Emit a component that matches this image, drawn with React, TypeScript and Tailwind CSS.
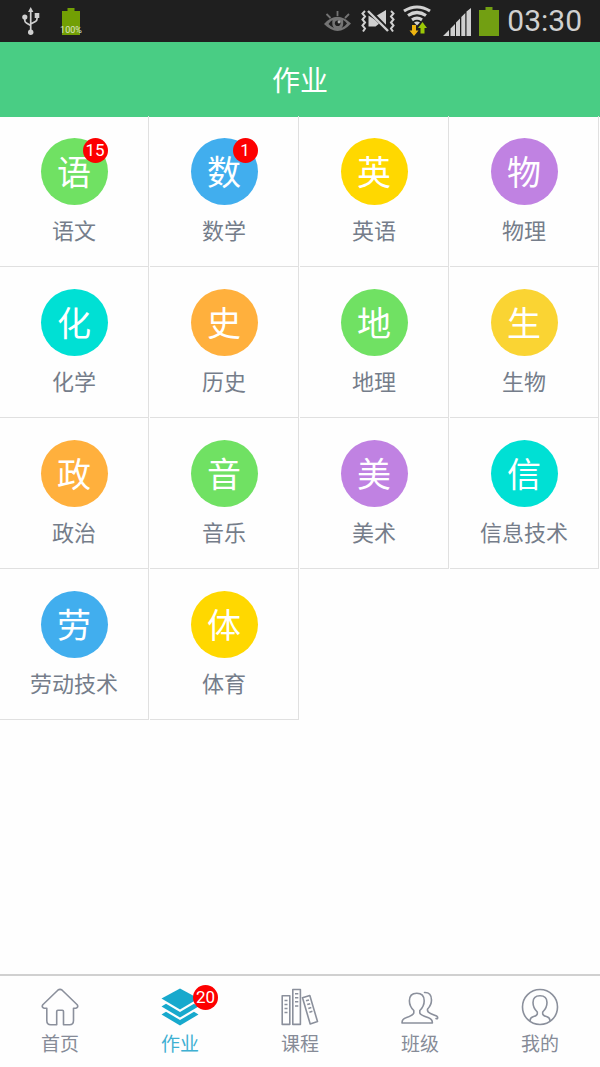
import type { ReactNode } from "react";
import clsx from "clsx";

type Subject = {
    name: string;
    short: string;
    color: string;
    count?: number;
};

const subjects: Subject[] = [
    { name: "语文", short: "语", color: "bg-[#70e163]", count: 15 },
    { name: "数学", short: "数", color: "bg-[#41aeee]", count: 1 },
    { name: "英语", short: "英", color: "bg-[#ffd800]" },
    { name: "物理", short: "物", color: "bg-[#c082e2]" },
    { name: "化学", short: "化", color: "bg-[#00e0d4]" },
    { name: "历史", short: "史", color: "bg-[#ffb03d]" },
    { name: "地理", short: "地", color: "bg-[#70e163]" },
    { name: "生物", short: "生", color: "bg-[#fad433]" },
    { name: "政治", short: "政", color: "bg-[#ffb03d]" },
    { name: "音乐", short: "音", color: "bg-[#70e163]" },
    { name: "美术", short: "美", color: "bg-[#c082e2]" },
    { name: "信息技术", short: "信", color: "bg-[#00e0d4]" },
    { name: "劳动技术", short: "劳", color: "bg-[#41aeee]" },
    { name: "体育", short: "体", color: "bg-[#ffd800]" },
];

function Badge({ count, className }: { count: number; className: string }) {
    return (
        <span
            className={clsx(
                "absolute flex h-[25px] w-[25px] items-center justify-center rounded-full bg-[#fd0000] font-['Roboto',sans-serif] text-[17px] leading-none text-white",
                className
            )}
        >
            {count}
        </span>
    );
}

function StatusBar() {
    return (
        <div className="flex h-[42px] shrink-0 items-center justify-between bg-[#1f1f1f] pl-[22px] pr-[18px] font-['Roboto',sans-serif]">
            <div className="flex items-center gap-5">
                {/* USB */}
                <svg width="18" height="42" viewBox="0 0 18 42" fill="none" stroke="#cfcfcf" strokeWidth="1.7">
                    <path d="M8.7 10v22M2.8 17v3.5q0 1.6 1.6 2.4l4.3 2.6M15 16v3q0 1.7-1.6 2.5l-4.7 2.6" />
                    <path d="M8.7 7l2.7 5H6z" fill="#cfcfcf" stroke="none" />
                    <circle cx="2.8" cy="17" r="2.6" fill="#cfcfcf" stroke="none" />
                    <circle cx="8.7" cy="32.3" r="2.7" fill="#cfcfcf" stroke="none" />
                    <path d="M12.7 13h4.6v5h-4.6z" fill="#cfcfcf" stroke="none" />
                </svg>
                <div className="relative">
                    <svg width="22" height="42" viewBox="0 0 22 42">
                        <path d="M7.500 8h7v3H20v24H2V11h5.500z" fill="#729f04" />
                    </svg>
                    <span className="absolute bottom-[7px] left-1/2 -translate-x-1/2 text-[9px] leading-none text-[#dde5c8]">100%</span>
                </div>
            </div>

            <div className="flex items-center">
                {/* Smart stay eye */}
                <svg className="mr-[9px]" width="28" height="42" viewBox="0 0 28 42" fill="none" stroke="#747474">
                    <path d="M0 24Q13 10 27 23.5Q14 38 0 24z" fill="#747474" stroke="none" />
                    <path d="M4.500 24Q6.500 21 8.500 20Q7.500 25 10 28Q6.500 26.500 4.500 24zM23 23.500Q21.500 21 19 20Q20 25 17.500 28Q21 26.500 23 23.500z" fill="#1f1f1f" stroke="none" />
                    <circle cx="13.7" cy="23.3" r="2.8" fill="#1f1f1f" stroke="none" />
                    <circle cx="15" cy="22" r="1.4" fill="#aaa" stroke="none" />
                    <path d="M13.500 11v5M2.500 14l4 4M25 14l-4 4" strokeWidth="1.8" />
                </svg>
                {/* Sound off, vibrating */}
                <svg className="mr-2" width="34" height="42" viewBox="0 0 34 42" fill="none" stroke="#cfcfcf">
                    <path d="M7.500 15.500V26.500H14.500L19 23zM15 16L25 10V27z" fill="#cfcfcf" stroke="none" />
                    <path d="M7 9.500L28 31" stroke="#1f1f1f" strokeWidth="4.500" />
                    <path d="M7 11L27 31" strokeWidth="2.400" />
                    <path d="M4 11L1.500 13.500 4 16.500 1.500 19.500 4 22.500 1.500 25.500 4 28.500 2 31.500M30 11l2.500 2.500L30 16.500l2.500 3L30 22.500l2.500 3L30 28.500l2 3" strokeWidth="2" />
                </svg>
                {/* Wi-Fi with traffic arrows */}
                <svg className="mr-3" width="28" height="42" viewBox="0 0 28 42" fill="none" stroke="#d2d2d2" strokeWidth="3.2">
                    <path d="M1 11Q14 3 27 11M5 15.500Q14 9.500 23 15.500M9 19.800Q14 16.500 19 19.800" />
                    <path d="M11 22.500q3-2 6 0l-3 3z" fill="#d2d2d2" stroke="none" />
                    <path d="M9 25h4v5.500H15.500L11 36 6.500 30.500H9z" fill="#efb511" stroke="none" />
                    <path d="M17.500 33.500h4V28H24l-4.500-6-4.500 6h2.500z" fill="#9bc706" stroke="none" />
                </svg>
                {/* Signal strength */}
                <svg className="mr-2" width="28" height="42" viewBox="0 0 28 42" fill="#cfcfcf">
                    <path d="M0 36l6-6v6zM7.500 28.500L12 24v12H7.500zM13 22.500l4-4v17.500h-4zM18.300 17l4-4v23h-4zM23.500 11.500L28 8v28h-4.500z" />
                </svg>
                <svg className="mr-2" width="20" height="42" viewBox="0 0 20 42">
                    <path d="M6.500 7h7v3H20v26H0V10h6.500z" fill="#729f12" />
                </svg>
                <time className="text-[30px] leading-none text-[#d0d0d0]">03:30</time>
            </div>
        </div>
    );
}

function SubjectCell({ subject }: { subject: Subject }) {
    return (
        <li className="pr-px">
            <button
                type="button"
                className="flex h-[151px] w-full flex-col items-center gap-2 border-r border-b border-[#e0e0e0] pt-[22px]"
            >
                <span
                    className={clsx(
                        "relative flex h-[67px] w-[67px] items-center justify-center rounded-full pb-0.5 text-[34px] leading-none text-white",
                        subject.color
                    )}
                >
                    {subject.short}
                    {subject.count !== undefined && <Badge count={subject.count} className="right-0 top-0" />}
                </span>
                <span className="text-[22px] leading-8 text-[#757d8a]">{subject.name}</span>
            </button>
        </li>
    );
}

function HomeIcon() {
    return (
        <svg width="38" height="38" viewBox="0 0 38 38" fill="none" stroke="#8b909c" strokeWidth="1.6" strokeLinejoin="round">
            <path d="M5.800 20.200H3.200Q.2 19.300 1.800 16.800L16.800 2.200Q19 .4 21.200 2.200L36.200 16.800Q37.800 19.300 34.800 20.200H32.500V32.500Q32.500 36.800 28.500 36.800H22.500V23.500Q22.500 22.300 21.300 22.300H16.900Q15.700 22.300 15.700 23.500V36.800H9.800Q5.800 36.800 5.800 32.500z" />
        </svg>
    );
}

function LayersIcon() {
    return (
        <svg width="38" height="38" viewBox="0 0 38 38" fill="#17a9cd">
            <path d="M19 .5L37.500 10.500L19 21.500L.5 10.500z" />
            <path d="M.5 18.500L5 15.800L19 24L33 15.800L37.500 18.500L19 29.500z" />
            <path d="M.5 26.500L5 23.800L19 32L33 23.800L37.500 26.500L19 37.500z" />
        </svg>
    );
}

function BooksIcon() {
    return (
        <svg width="38" height="38" viewBox="0 0 38 38" fill="none" stroke="#8b909c" strokeWidth="1.6" strokeLinejoin="round">
            <path d="M1.200 7.800h7.600v28.600H1.200zM11.800 1.500h7.600v34.900h-7.600zM21.500 9.800l7.300-2.300 7.700 26-7.300 2.500z" />
            <path d="M3.500 12.500h3M3.500 16.500h3M3.500 20.500h3M3.500 24.500h3M14 5.800h3.300M14 9.800h3.300M14 13.800h3.300M14 18h3.300M25 12.800l3-.9M26.200 16.600l3-.9M27.300 20.400l3-.9M28.400 24.200l3-.9" />
        </svg>
    );
}

function ClassIcon() {
    return (
        <svg width="38" height="38" viewBox="0 0 38 38" fill="none" stroke="#8b909c" strokeWidth="1.6" strokeLinecap="round" strokeLinejoin="round">
            <path d="M12.800 22.500Q8.400 18.500 8.400 12.800Q8.400 5.200 15.800 5.200Q23.200 5.200 23.200 12.800Q23.200 18.500 18.800 22.500V25Q19.500 27.200 27.500 29.800Q31.400 31 31.400 35H1Q1 31 4.900 29.800Q12 27.400 12.800 25z" />
            <path d="M23.500 4.500Q30.500 4.200 30.500 12Q30.500 17 26.600 21Q25.800 24 29.500 25.500Q34.500 27.500 36 28.300Q37 29 36.500 30.600H35" />
        </svg>
    );
}

function ProfileIcon() {
    return (
        <svg width="38" height="38" viewBox="0 0 38 38" fill="none" stroke="#8b909c" strokeWidth="1.6" strokeLinejoin="round">
            <circle cx="19" cy="19" r="17.500" />
            <path d="M9 33Q9 29.800 12 28.800Q15.800 27.800 16.300 26V24Q12 20 12 14.500Q12 7.800 19 7.800Q26 7.800 26 14.500Q26 20 21.700 24V26Q22.200 27.800 26 28.800Q29 29.800 29 33" />
        </svg>
    );
}

type Tab = { label: string; icon: ReactNode; active?: boolean; count?: number };

const tabs: Tab[] = [
    { label: "首页", icon: <HomeIcon /> },
    { label: "作业", icon: <LayersIcon />, active: true, count: 20 },
    { label: "课程", icon: <BooksIcon /> },
    { label: "班级", icon: <ClassIcon /> },
    { label: "我的", icon: <ProfileIcon /> },
];

export default function App() {
    return (
        <div className="flex min-h-screen flex-col bg-[#fefefe] font-['Noto_Sans_CJK_SC',sans-serif]">
            <StatusBar />

            <header className="flex h-[75px] shrink-0 items-center justify-center bg-[#49cd84] pb-0.5">
                <h1 className="text-[28px] leading-10 text-white">作业</h1>
            </header>

            <main className="-mt-px flex-1">
                <ul className="grid grid-cols-4">
                    {subjects.map((subject) => (
                        <SubjectCell key={subject.name} subject={subject} />
                    ))}
                </ul>
            </main>

            <nav className="grid shrink-0 grid-cols-5 border-t-2 border-[#d0d0d0] pb-2.5 pt-3">
                {tabs.map((tab) => (
                    <a
                        key={tab.label}
                        href="#"
                        aria-current={tab.active ? "page" : undefined}
                        className={clsx("flex flex-col items-center gap-[3px]", tab.active ? "text-[#3fb0d2]" : "text-[#868b97]")}
                    >
                        <span className="relative">
                            {tab.icon}
                            {tab.count !== undefined && <Badge count={tab.count} className="-right-[19px] -top-[3px]" />}
                        </span>
                        <span className="text-[19px] leading-7">{tab.label}</span>
                    </a>
                ))}
            </nav>
        </div>
    );
}
